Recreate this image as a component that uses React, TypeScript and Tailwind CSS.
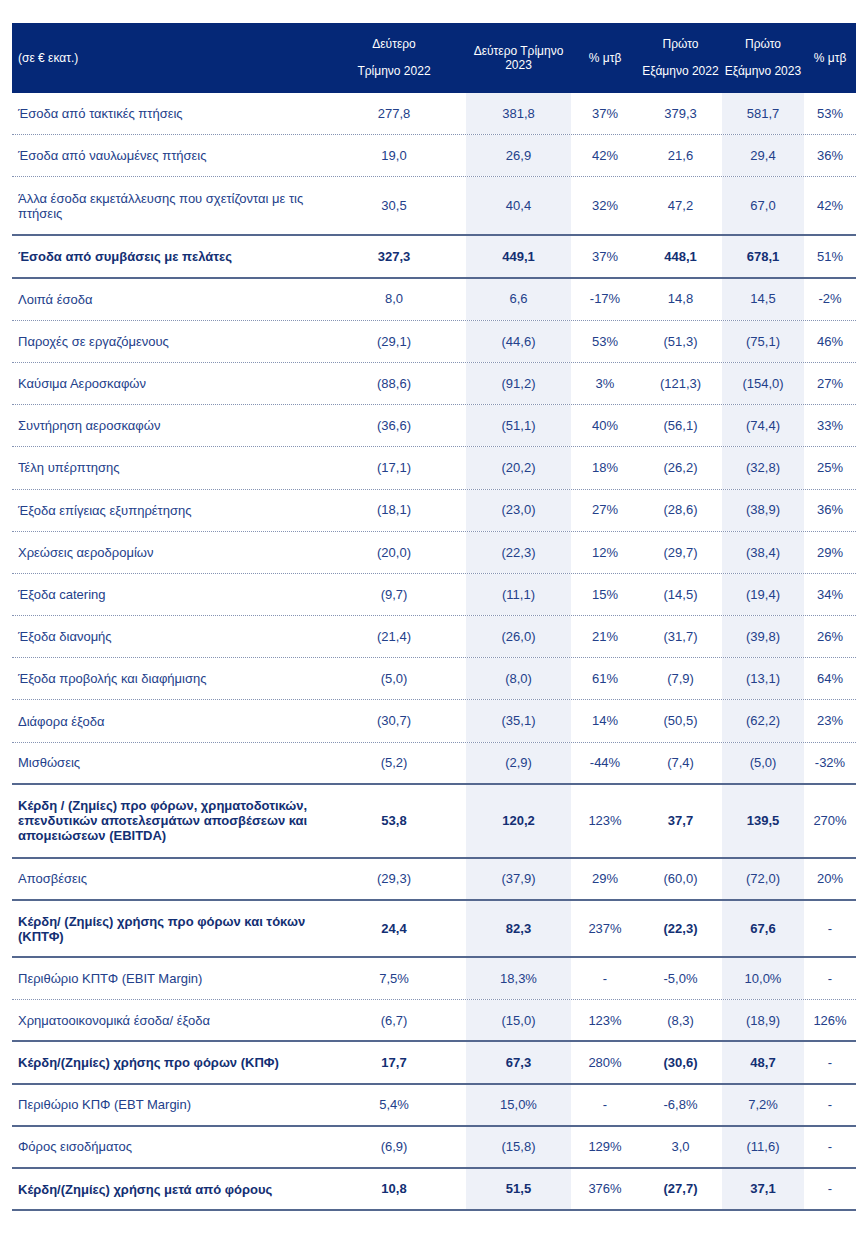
import React from "react";

type Row = {
  label: React.ReactNode;
  v: [string, string, string, string, string, string];
  bold?: boolean;
  h?: string;
  line: "dot" | "solid";
};

const rows: Row[] = [
  { label: "Έσοδα από τακτικές πτήσεις", v: ["277,8", "381,8", "37%", "379,3", "581,7", "53%"], line: "dot" },
  { label: "Έσοδα από ναυλωμένες πτήσεις", v: ["19,0", "26,9", "42%", "21,6", "29,4", "36%"], line: "dot" },
  {
    label: (
      <>
        Άλλα έσοδα εκμετάλλευσης που σχετίζονται με τις
        <br />
        πτήσεις
      </>
    ),
    v: ["30,5", "40,4", "32%", "47,2", "67,0", "42%"],
    h: "h-[59px]",
    line: "solid",
  },
  { label: "Έσοδα από συμβάσεις με πελάτες", v: ["327,3", "449,1", "37%", "448,1", "678,1", "51%"], bold: true, line: "solid" },
  { label: "Λοιπά έσοδα", v: ["8,0", "6,6", "-17%", "14,8", "14,5", "-2%"], line: "dot" },
  { label: "Παροχές σε εργαζόμενους", v: ["(29,1)", "(44,6)", "53%", "(51,3)", "(75,1)", "46%"], line: "dot" },
  { label: "Καύσιμα Αεροσκαφών", v: ["(88,6)", "(91,2)", "3%", "(121,3)", "(154,0)", "27%"], line: "dot" },
  { label: "Συντήρηση αεροσκαφών", v: ["(36,6)", "(51,1)", "40%", "(56,1)", "(74,4)", "33%"], line: "dot" },
  { label: "Τέλη υπέρπτησης", v: ["(17,1)", "(20,2)", "18%", "(26,2)", "(32,8)", "25%"], line: "dot" },
  { label: "Έξοδα επίγειας εξυπηρέτησης", v: ["(18,1)", "(23,0)", "27%", "(28,6)", "(38,9)", "36%"], line: "dot" },
  { label: "Χρεώσεις αεροδρομίων", v: ["(20,0)", "(22,3)", "12%", "(29,7)", "(38,4)", "29%"], line: "dot" },
  { label: "Έξοδα catering", v: ["(9,7)", "(11,1)", "15%", "(14,5)", "(19,4)", "34%"], line: "dot" },
  { label: "Έξοδα διανομής", v: ["(21,4)", "(26,0)", "21%", "(31,7)", "(39,8)", "26%"], line: "dot" },
  { label: "Έξοδα προβολής και διαφήμισης", v: ["(5,0)", "(8,0)", "61%", "(7,9)", "(13,1)", "64%"], line: "dot" },
  { label: "Διάφορα έξοδα", v: ["(30,7)", "(35,1)", "14%", "(50,5)", "(62,2)", "23%"], line: "dot" },
  { label: "Μισθώσεις", v: ["(5,2)", "(2,9)", "-44%", "(7,4)", "(5,0)", "-32%"], line: "solid" },
  {
    label: (
      <>
        Κέρδη / (Ζημίες) προ φόρων, χρηματοδοτικών,
        <br />
        επενδυτικών αποτελεσμάτων αποσβέσεων και
        <br />
        απομειώσεων (EBITDA)
      </>
    ),
    v: ["53,8", "120,2", "123%", "37,7", "139,5", "270%"],
    bold: true,
    h: "h-[74px]",
    line: "solid",
  },
  { label: "Αποσβέσεις", v: ["(29,3)", "(37,9)", "29%", "(60,0)", "(72,0)", "20%"], line: "solid" },
  {
    label: (
      <>
        Κέρδη/ (Ζημίες) χρήσης προ φόρων και τόκων
        <br />
        (ΚΠΤΦ)
      </>
    ),
    v: ["24,4", "82,3", "237%", "(22,3)", "67,6", "-"],
    bold: true,
    h: "h-[57px]",
    line: "solid",
  },
  { label: "Περιθώριο ΚΠΤΦ (EBIT Margin)", v: ["7,5%", "18,3%", "-", "-5,0%", "10,0%", "-"], line: "dot" },
  { label: "Χρηματοοικονομικά έσοδα/ έξοδα", v: ["(6,7)", "(15,0)", "123%", "(8,3)", "(18,9)", "126%"], line: "solid" },
  { label: "Κέρδη/(Ζημίες) χρήσης προ φόρων (ΚΠΦ)", v: ["17,7", "67,3", "280%", "(30,6)", "48,7", "-"], bold: true, line: "solid" },
  { label: "Περιθώριο ΚΠΦ (EBT Margin)", v: ["5,4%", "15,0%", "-", "-6,8%", "7,2%", "-"], line: "solid" },
  { label: "Φόρος εισοδήματος", v: ["(6,9)", "(15,8)", "129%", "3,0", "(11,6)", "-"], line: "solid" },
  { label: "Κέρδη/(Ζημίες) χρήσης μετά από φόρους", v: ["10,8", "51,5", "376%", "(27,7)", "37,1", "-"], bold: true, line: "solid" },
];

const cols = "grid grid-cols-[310px_144px_105px_68px_83px_82px_52px]";
const shaded = [false, true, false, false, true, false];
const pct = [false, false, true, false, false, true];

function DataRow({ r }: { r: Row }) {
  return (
    <div
      className={`${cols} ${r.h ?? "h-[42.2px]"} ${
        r.line === "dot" ? "border-b border-dotted border-[#8593b3]" : "border-b-2 border-[#55688f]"
      }`}
    >
      <div className={`flex items-center pl-[6px] leading-[15px] ${r.bold ? "font-bold text-[#132f73]" : ""}`}>
        {r.label}
      </div>
      {r.v.map((v, i) => (
        <div
          key={i}
          className={`flex items-center justify-center ${shaded[i] ? "bg-[#eef1f8]" : ""} ${
            r.bold && !pct[i] ? "font-bold text-[#132f73]" : ""
          }`}
        >
          {v}
        </div>
      ))}
    </div>
  );
}

export default function App() {
  return (
    <div className="min-h-screen bg-white pt-[23px] font-['Liberation_Sans',Arial,sans-serif] text-[13px] text-[#23408a]">
      <div className="ml-[12px] w-[844px]">
        <div className={`${cols} h-[70px] bg-[#052877] text-[12px] text-white`}>
          <div className="flex items-center pl-[6px]">(σε € εκατ.)</div>
          <div className="flex flex-col items-center justify-center text-center leading-[27px]">
            <span>Δεύτερο</span>
            <span>Τρίμηνο 2022</span>
          </div>
          <div className="flex flex-col items-center justify-center text-center leading-[14px]">
            <span>Δεύτερο Τρίμηνο</span>
            <span>2023</span>
          </div>
          <div className="flex items-center justify-center">% μτβ</div>
          <div className="flex flex-col items-center justify-center whitespace-nowrap text-center leading-[27px]">
            <span>Πρώτο</span>
            <span>Εξάμηνο 2022</span>
          </div>
          <div className="flex flex-col items-center justify-center whitespace-nowrap text-center leading-[27px]">
            <span>Πρώτο</span>
            <span>Εξάμηνο 2023</span>
          </div>
          <div className="flex items-center justify-center">% μτβ</div>
        </div>
        {rows.map((r, i) => (
          <DataRow key={i} r={r} />
        ))}
      </div>
    </div>
  );
}
